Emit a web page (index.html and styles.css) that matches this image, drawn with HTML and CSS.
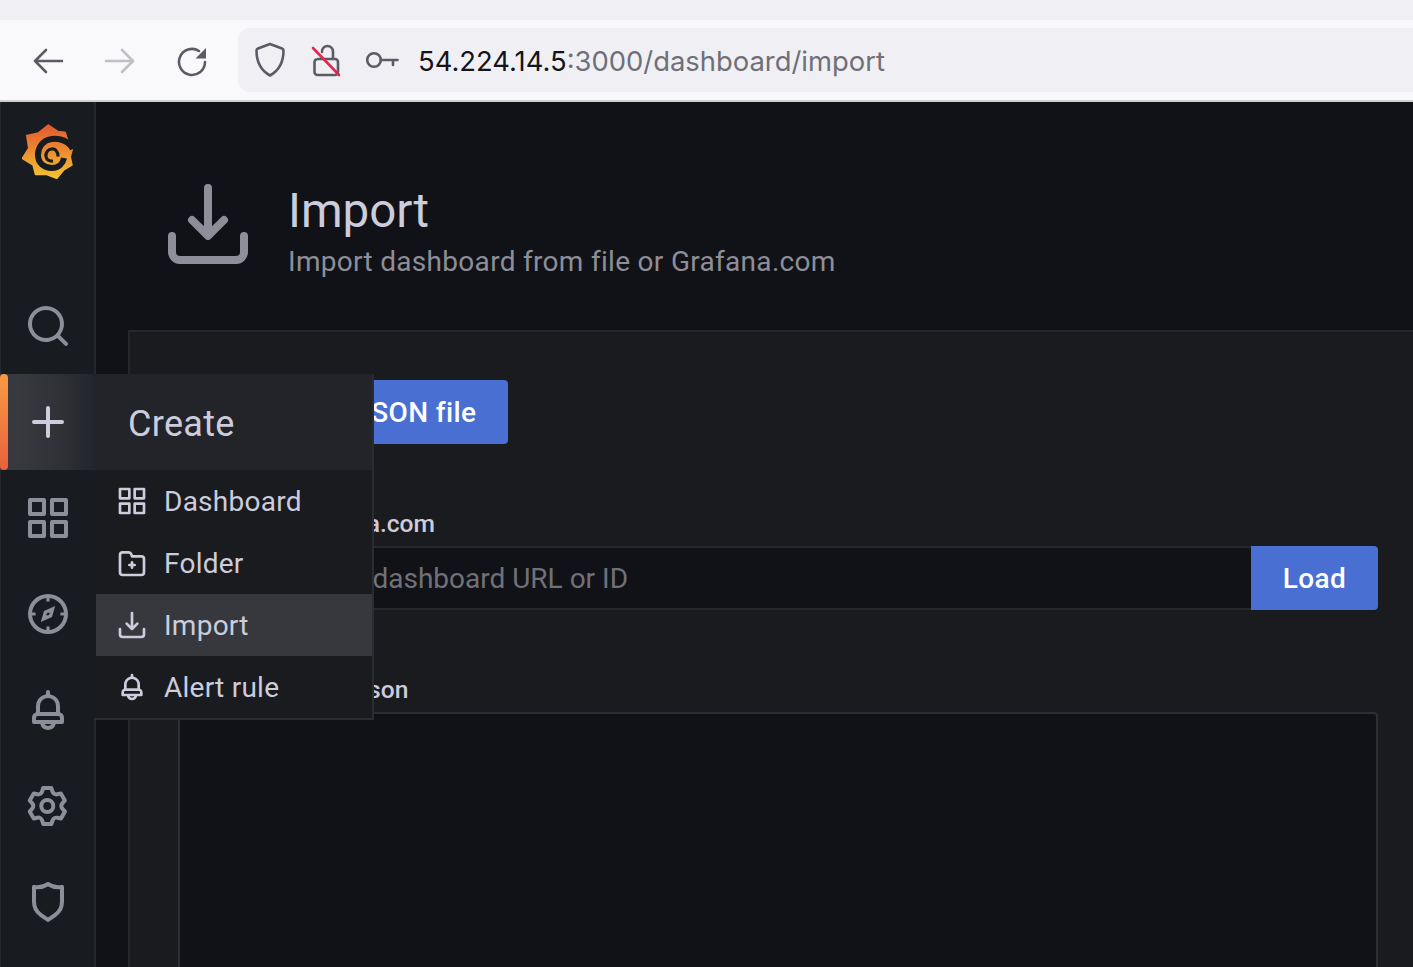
FILE: index.html
```html
<!DOCTYPE html>
<html lang="en">
<head>
  <meta charset="UTF-8" />
  <meta name="viewport" content="width=device-width, initial-scale=1.0" />
  <title>Import</title>
  <link rel="stylesheet" href="styles.css">
</head>
<body>
  <div class="tabstrip"></div>
  <div class="toolbar">
    <svg class="nav-icon" viewBox="0 0 32 32"><path d="M30 16H3M14 5 3 16l11 11" /></svg>
    <svg class="nav-icon nav-off" viewBox="0 0 32 32"><path d="M2 16h27M18 5l11 11-11 11" /></svg>
    <svg class="nav-icon" viewBox="0 0 32 32"><path d="M29 17A13 13 0 1 1 23 6" /><path class="solid" d="M30 3v10.500H19.500z" /></svg>
    <div class="address">
      <svg class="addr-icon" viewBox="0 0 32 36"><path d="M16 2 28 6.500c1 .4 1.500 1 1.500 2 0 12-4.500 20-13.500 25C7 28.500 2.500 20.500 2.500 8.500c0-1 .5-1.600 1.500-2z" /></svg>
      <svg class="addr-icon lock" viewBox="0 0 32 36">
        <path d="M12 10V9.500a5.500 5.500 0 0 1 11 0V17" />
        <path d="M8 17h17a3 3 0 0 1 3 3v10a3 3 0 0 1-3 3H7.500a3 3 0 0 1-3-3V20a3 3 0 0 1 1.500-2.500" />
        <path class="slash" d="M3 6l26 27" />
      </svg>
      <svg class="addr-icon key" viewBox="0 0 34 20"><circle cx="9" cy="10" r="6.800" /><path d="M15.800 10H32.500M28 10v5" /></svg>
      <span class="url"><span class="host">54.224.14.5</span>:3000/dashboard/import</span>
    </div>
  </div>

  <div class="app">
    <nav class="sidebar">
      <div class="logo">
        <svg viewBox="0 0 52 56" width="52" height="56">
          <defs>
            <linearGradient id="logoFill" x1="0" y1="0" x2="0" y2="1">
              <stop offset="0" stop-color="#e2592f" />
              <stop offset="1" stop-color="#f5c232" />
            </linearGradient>
          </defs>
          <path fill="url(#logoFill)" stroke="url(#logoFill)" stroke-width="2" stroke-linejoin="round" d="M26.300 1.300 35.700 7.700 43 8.500 45.300 16 50.300 24.300 48 32.700 49.700 41 41.300 46 34.700 54 24.700 50.300 13.700 50.300 11.300 41 .7 34.300 7 24.300 5 11.700 16.300 9.300z" />
          <path fill="none" stroke="#181b1f" stroke-width="6" d="M51 25C47 17 38 14 30 15 21 16 16 23 16 31 16 39 22 44 30 44 37 44 41 39 42 34" />
          <path fill="none" stroke="#181b1f" stroke-width="3.200" d="M36 32.500C36 27 33 24.500 29.500 25 25.500 25.500 23.500 29 24 32.500 24.600 35.800 27.500 37.500 31 37" />
        </svg>
      </div>
      <a class="side-item">
        <svg class="icon icon-lg" viewBox="0 0 24 24"><path d="M21.710,20.290,18,16.610A9,9,0,1,0,16.610,18l3.680,3.680a1,1,0,0,0,1.420,0A1,1,0,0,0,21.710,20.290ZM11,18a7,7,0,1,1,7-7A7,7,0,0,1,11,18Z" /></svg>
      </a>
      <a class="side-item active">
        <svg class="icon icon-lg" viewBox="0 0 24 24"><path d="M19,11H13V5a1,1,0,0,0-2,0v6H5a1,1,0,0,0,0,2h6v6a1,1,0,0,0,2,0V13h6a1,1,0,0,0,0-2Z" /></svg>
      </a>
      <a class="side-item">
        <svg class="icon icon-lg" viewBox="0 0 24 24"><path d="M10,13H3a1,1,0,0,0-1,1v7a1,1,0,0,0,1,1h7a1,1,0,0,0,1-1V14A1,1,0,0,0,10,13ZM9,20H4V15H9ZM21,2H14a1,1,0,0,0-1,1v7a1,1,0,0,0,1,1h7a1,1,0,0,0,1-1V3A1,1,0,0,0,21,2ZM20,9H15V4h5Zm1,4H14a1,1,0,0,0-1,1v7a1,1,0,0,0,1,1h7a1,1,0,0,0,1-1V14A1,1,0,0,0,21,13Zm-1,7H15V15h5ZM10,2H3A1,1,0,0,0,2,3v7a1,1,0,0,0,1,1h7a1,1,0,0,0,1-1V3A1,1,0,0,0,10,2ZM9,9H4V4H9Z" /></svg>
      </a>
      <a class="side-item">
        <svg class="icon icon-lg" viewBox="0 0 24 24"><path fill-rule="evenodd" d="M12 2a10 10 0 1 0 0 20 10 10 0 0 0 0-20Zm0 2a8 8 0 0 1 0 16 8 8 0 0 1 0-16Z" /><path d="M11.200 3.500h1.600v2.300h-1.600zM11.200 18.200h1.600v2.300h-1.600zM3.500 11.200h2.300v1.600h-2.300zM18.200 11.200h2.300v1.600h-2.300z" /><path fill-rule="evenodd" d="M15.600 8 14 13.500 8.400 16 10 10.500zM12.900 11.200l-1.400.3-.4 1.300 1.400-.3z" /></svg>
      </a>
      <a class="side-item">
        <svg class="icon icon-lg" viewBox="0 0 24 24"><path d="M18,13.180V10a6,6,0,0,0-5-5.910V3a1,1,0,0,0-2,0V4.090A6,6,0,0,0,6,10v3.180A3,3,0,0,0,4,16v2a1,1,0,0,0,1,1H8.140a4,4,0,0,0,7.720,0H19a1,1,0,0,0,1-1V16A3,3,0,0,0,18,13.180ZM8,10a4,4,0,0,1,8,0v3H8Zm4,10a2,2,0,0,1-1.720-1h3.440A2,2,0,0,1,12,20Zm6-3H6V16a1,1,0,0,1,1-1H17a1,1,0,0,1,1,1Z" /></svg>
      </a>
      <a class="side-item">
        <svg class="icon icon-lg" viewBox="0 0 24 24"><path d="M19.900,12.660a1,1,0,0,1,0-1.320L21.180,9.900a1,1,0,0,0,.12-1.170l-2-3.460a1,1,0,0,0-1.070-.48l-1.880.38a1,1,0,0,1-1.150-.66l-.61-1.830A1,1,0,0,0,13.640,2h-4a1,1,0,0,0-1,.68L8.080,4.510a1,1,0,0,1-1.150.66L5,4.790A1,1,0,0,0,4,5.270L2,8.730A1,1,0,0,0,2.100,9.900l1.270,1.440a1,1,0,0,1,0,1.320L2.100,14.100A1,1,0,0,0,2,15.270l2,3.460a1,1,0,0,0,1.070.48l1.880-.38a1,1,0,0,1,1.150.66l.61,1.830a1,1,0,0,0,1,.68h4a1,1,0,0,0,.95-.68l.61-1.830a1,1,0,0,1,1.150-.66l1.880.38a1,1,0,0,0,1.070-.48l2-3.460a1,1,0,0,0-.12-1.170ZM18.410,14l.8.9-1.280,2.220-1.180-.24a3,3,0,0,0-3.450,2L12.920,20H10.360L10,18.860a3,3,0,0,0-3.450-2l-1.180.24L4.070,14.890l.8-.9a3,3,0,0,0,0-4l-.8-.9L5.350,6.890l1.180.24a3,3,0,0,0,3.450-2L10.360,4h2.560l.38,1.140a3,3,0,0,0,3.450,2l1.180-.24,1.280,2.220-.8.9A3,3,0,0,0,18.410,14ZM11.640,8a4,4,0,1,0,4,4A4,4,0,0,0,11.640,8Zm0,6a2,2,0,1,1,2-2A2,2,0,0,1,11.640,14Z" /></svg>
      </a>
      <a class="side-item">
        <svg class="icon icon-lg" viewBox="0 0 24 24"><path d="M19.630,3.650a1,1,0,0,0-.84-.2,8,8,0,0,1-6.220-1.270,1,1,0,0,0-1.140,0A8,8,0,0,1,5.210,3.450a1,1,0,0,0-.84.2A1,1,0,0,0,4,4.430v7.450a9,9,0,0,0,3.770,7.330l3.650,2.600a1,1,0,0,0,1.160,0l3.650-2.600A9,9,0,0,0,20,11.880V4.430A1,1,0,0,0,19.630,3.650ZM18,11.880a7,7,0,0,1-2.930,5.700L12,19.770l-3.070-2.190A7,7,0,0,1,6,11.880V5.580a10,10,0,0,0,6-1.390,10,10,0,0,0,6,1.390Z" /></svg>
      </a>

      <div class="flyout">
        <div class="flyout-title">Create</div>
        <a class="flyout-item">
          <svg class="icon icon-sm" viewBox="0 0 24 24"><path d="M10,13H3a1,1,0,0,0-1,1v7a1,1,0,0,0,1,1h7a1,1,0,0,0,1-1V14A1,1,0,0,0,10,13ZM9,20H4V15H9ZM21,2H14a1,1,0,0,0-1,1v7a1,1,0,0,0,1,1h7a1,1,0,0,0,1-1V3A1,1,0,0,0,21,2ZM20,9H15V4h5Zm1,4H14a1,1,0,0,0-1,1v7a1,1,0,0,0,1,1h7a1,1,0,0,0,1-1V14A1,1,0,0,0,21,13Zm-1,7H15V15h5ZM10,2H3A1,1,0,0,0,2,3v7a1,1,0,0,0,1,1h7a1,1,0,0,0,1-1V3A1,1,0,0,0,10,2ZM9,9H4V4H9Z" /></svg>
          Dashboard
        </a>
        <a class="flyout-item">
          <svg class="icon icon-sm" viewBox="0 0 24 24"><path d="M10,14.500h1v1a1,1,0,0,0,2,0v-1h1a1,1,0,0,0,0-2H13v-1a1,1,0,0,0-2,0v1H10a1,1,0,0,0,0,2ZM19,6H12.720l-.32-1a3,3,0,0,0-2.840-2H5A3,3,0,0,0,2,6V19a3,3,0,0,0,3,3H19a3,3,0,0,0,3-3V9A3,3,0,0,0,19,6Zm1,13a1,1,0,0,1-1,1H5a1,1,0,0,1-1-1V6A1,1,0,0,1,5,5H9.560a1,1,0,0,1,.95.68l.54,1.640A1,1,0,0,0,12,8h7a1,1,0,0,1,1,1Z" /></svg>
          Folder
        </a>
        <a class="flyout-item selected">
          <svg class="icon icon-sm" viewBox="0 0 24 24"><path d="M21,14a1,1,0,0,0-1,1v4a1,1,0,0,1-1,1H5a1,1,0,0,1-1-1V15a1,1,0,0,0-2,0v4a3,3,0,0,0,3,3H19a3,3,0,0,0,3-3V15A1,1,0,0,0,21,14Zm-9.710,1.710a1,1,0,0,0,.33.21.94.94,0,0,0,.76,0,1,1,0,0,0,.33-.21l4-4a1,1,0,0,0-1.420-1.420L13,12.590V3a1,1,0,0,0-2,0v9.590l-2.290-2.300a1,1,0,1,0-1.420,1.420Z" /></svg>
          Import
        </a>
        <a class="flyout-item">
          <svg class="icon icon-sm" viewBox="0 0 24 24"><path d="M18,13.180V10a6,6,0,0,0-5-5.910V3a1,1,0,0,0-2,0V4.090A6,6,0,0,0,6,10v3.180A3,3,0,0,0,4,16v2a1,1,0,0,0,1,1H8.140a4,4,0,0,0,7.720,0H19a1,1,0,0,0,1-1V16A3,3,0,0,0,18,13.180ZM8,10a4,4,0,0,1,8,0v3H8Zm4,10a2,2,0,0,1-1.720-1h3.440A2,2,0,0,1,12,20Zm6-3H6V16a1,1,0,0,1,1-1H17a1,1,0,0,1,1,1Z" /></svg>
          Alert rule
        </a>
      </div>
    </nav>

    <main class="content">
      <header class="page-header">
        <svg class="icon header-icon" viewBox="0 0 24 24"><path d="M21,14a1,1,0,0,0-1,1v4a1,1,0,0,1-1,1H5a1,1,0,0,1-1-1V15a1,1,0,0,0-2,0v4a3,3,0,0,0,3,3H19a3,3,0,0,0,3-3V15A1,1,0,0,0,21,14Zm-9.710,1.710a1,1,0,0,0,.33.21.94.94,0,0,0,.76,0,1,1,0,0,0,.33-.21l4-4a1,1,0,0,0-1.420-1.420L13,12.590V3a1,1,0,0,0-2,0v9.590l-2.290-2.300a1,1,0,1,0-1.420,1.420Z" /></svg>
        <div class="header-text">
          <h1>Import</h1>
          <p class="subtitle">Import dashboard from file or Grafana.com</p>
        </div>
      </header>

      <section class="panel">
        <div class="panel-body">
          <button class="btn btn-upload">Upload JSON file</button>
          <label class="field-label">Import via grafana.com</label>
          <div class="url-row">
            <input class="url-input" type="text" placeholder="Grafana.com dashboard URL or ID">
            <button class="btn btn-load">Load</button>
          </div>
          <label class="field-label">Import via panel json</label>
          <textarea class="json-input"></textarea>
        </div>
      </section>
    </main>
  </div>
</body>
</html>
```

FILE: styles.css
```css
* {
  box-sizing: border-box;
}

body {
  margin: 0;
  height: 967px;
  overflow: hidden;
  font-family: Roboto, sans-serif;
  background-color: #111217;
  color: #ccccdc;
}

/* browser chrome */
.tabstrip {
  height: 20px;
  background-color: #f0f0f4;
}

.toolbar {
  height: 82px;
  padding: 8px 0 8px 32px;
  display: flex;
  align-items: center;
  background-color: #f9f9fb;
  border-bottom: 2px solid #cfcfd4;
}

.nav-icon {
  width: 32px;
  height: 32px;
  margin: 2px 40px 0 0;
  fill: none;
  stroke: #5b5b66;
  stroke-width: 2.6;
  stroke-linecap: round;
  stroke-linejoin: round;
}

.nav-off {
  stroke: #bfbfc6;
}

.nav-icon .solid {
  fill: #5b5b66;
  stroke: none;
}

.address {
  flex: 1;
  height: 64px;
  margin-left: -10px;
  padding-left: 16px;
  display: flex;
  align-items: center;
  background-color: #f0f0f4;
  border-radius: 12px 0 0 12px;
}

.addr-icon {
  width: 32px;
  height: 36px;
  margin-right: 24px;
  fill: none;
  stroke: #5b5b66;
  stroke-width: 2.6;
  stroke-linecap: round;
  stroke-linejoin: round;
}

.lock .slash {
  stroke: #e22850;
}

.lock {
  margin-right: 23px;
}

.key {
  width: 34px;
  height: 20px;
  margin-right: 19px;
}

.url {
  margin-top: 2px;
  font-family: Inter, sans-serif;
  font-size: 27.4px;
  color: #6f6f78;
}

.host {
  color: #15141a;
}

/* app */
.app {
  position: relative;
  display: flex;
  height: 865px;
}

.icon {
  fill: currentColor;
  display: block;
  flex: none;
}

.icon-lg {
  width: 48px;
  height: 48px;
}

.icon-sm {
  width: 32px;
  height: 32px;
}

.sidebar {
  width: 96px;
  flex: none;
  background-color: #181b1f;
  border-right: 2px solid #25272c;
  border-left: 1px solid #25272c;
  color: #8e8e98;
}

.logo {
  height: 176px;
  padding: 22px 0 0 21px;
}

.side-item {
  height: 96px;
  margin-left: -1px;
  padding-left: 2px;
  display: flex;
  align-items: center;
  justify-content: center;
  position: relative;
}

.side-item.active {
  color: #ccccdc;
  background: linear-gradient(90deg, #37393f 20%, #2e3035 70%, #22252b 100%);
}

.side-item.active::before {
  content: "";
  position: absolute;
  left: 0;
  top: 0;
  bottom: 0;
  width: 8px;
  border-radius: 4px;
  background: linear-gradient(180deg, #f99b42, #e8603e);
}

/* Create menu, sits over the page */
.flyout {
  position: absolute;
  left: 94px;
  top: 272px;
  width: 280px;
  height: 346px;
  background-color: #1a1b1f;
  border: 2px solid #2a2c31;
  border-top: none;
  border-left: none;
  color: #ccccdc;
  z-index: 2;
}

.flyout-title {
  height: 96px;
  padding: 4px 0 0 34px;
  display: flex;
  align-items: center;
  font-size: 36px;
  letter-spacing: 0.3px;
  background-color: #22242a;
}

.flyout-item {
  height: 62px;
  margin-left: 2px;
  padding-left: 20px;
  display: flex;
  align-items: center;
  gap: 16px;
  font-size: 28px;
  letter-spacing: 0.25px;
}

.flyout-item.selected {
  background-color: #36383e;
}

/* page */
.content {
  flex: 1;
  min-width: 0;
  overflow: hidden;
}

.page-header {
  height: 228px;
  padding: 74px 0 0 64px;
  display: flex;
  gap: 32px;
}

.header-icon {
  width: 96px;
  height: 96px;
  color: #8e8e98;
}

.header-text {
  padding-top: 1px;
}

h1 {
  margin: 0;
  font-size: 47.5px;
  font-weight: 400;
  line-height: 68px;
}

.subtitle {
  margin: 0;
  font-size: 28px;
  letter-spacing: 0.3px;
  line-height: 34px;
  color: #8e8e98;
}

.panel {
  margin-left: 32px;
  width: 1400px;
  height: 700px;
  padding: 48px 0 0 48px;
  background-color: #1a1b1f;
  border: 2px solid #25272c;
}

.panel-body {
  width: 1200px;
}

.btn {
  height: 64px;
  border: none;
  border-radius: 4px;
  padding: 0 32px;
  font-family: Roboto, sans-serif;
  font-size: 28px;
  font-weight: 500;
  letter-spacing: 0.35px;
  color: #fff;
  background-color: #4a6fd2;
  display: block;
}

.btn-upload {
  margin-left: 48px;
}

.field-label {
  display: block;
  margin: 64px 0 6px 0;
  font-size: 24.6px;
  font-weight: 500;
  line-height: 32px;
  color: #ccccdc;
}

.url-row {
  display: flex;
}

.url-input {
  flex: 1;
  height: 64px;
  padding: 0 0 0 24px;
  background-color: #111217;
  border: 2px solid #25272c;
  border-right: none;
  font-family: Roboto, sans-serif;
  font-size: 28px;
  color: #ccccdc;
}

.url-input::placeholder {
  color: #707178;
}

.btn-load {
  width: 127px;
  padding: 0;
  border-radius: 0 4px 4px 0;
}

.json-input {
  display: block;
  width: 100%;
  height: 400px;
  background-color: #111217;
  border: 2px solid #2c2e33;
  border-radius: 4px;
  resize: none;
}
```
